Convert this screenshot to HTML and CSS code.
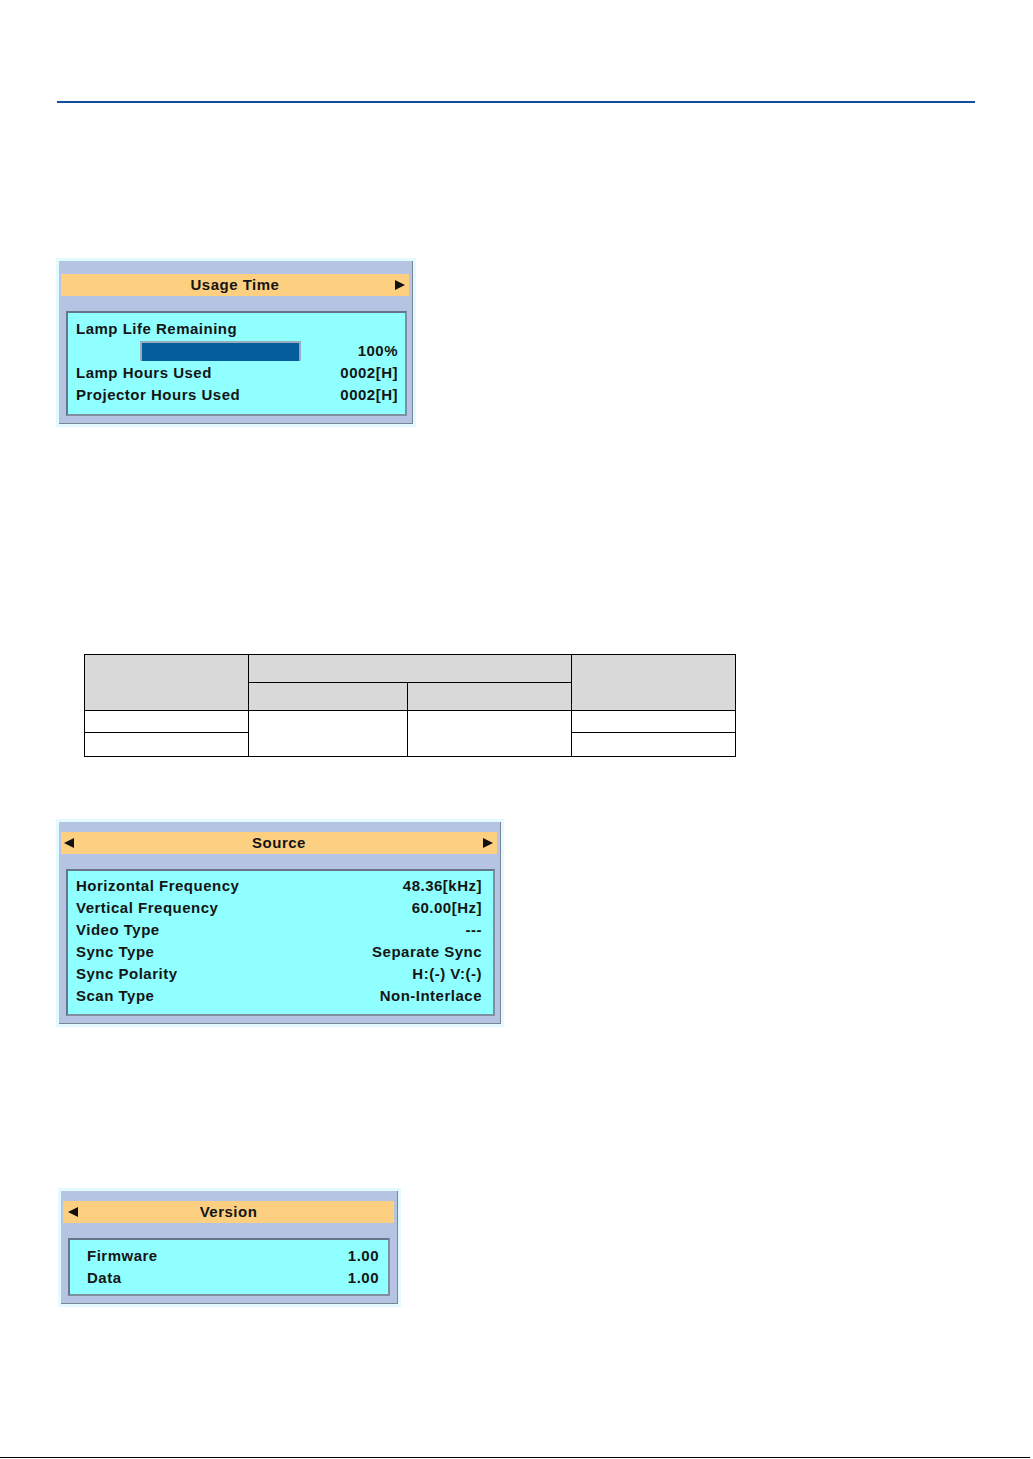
FILE: index.html
```html
<!DOCTYPE html>
<html lang="en">
<head>
    <meta charset="UTF-8">
    <meta name="viewport" content="width=device-width, initial-scale=1.0">
    <title>Information</title>
    <link rel="stylesheet" href="styles.css">
</head>
<body>
    <div class="page">
        <div class="top-rule"></div>

        <!-- Usage Time -->
        <div class="osd osd-usage">
            <div class="osd-frame">
                <div class="osd-head">
                    <span class="arrow-slot"></span>
                    <span class="osd-title">Usage Time</span>
                    <span class="arrow-slot arrow-right">
                        <svg width="10" height="10" viewBox="0 0 10 10"><polygon points="0,0 10,5 0,10" fill="#111"/></svg>
                    </span>
                </div>
                <div class="osd-box">
                    <div class="osd-row"><span>Lamp Life Remaining</span></div>
                    <div class="osd-row">
                        <span class="lamp-bar"><span class="lamp-fill" style="width: 100%;"></span></span>
                        <span>100%</span>
                    </div>
                    <div class="osd-row"><span>Lamp Hours Used</span><span>0002[H]</span></div>
                    <div class="osd-row"><span>Projector Hours Used</span><span>0002[H]</span></div>
                </div>
            </div>
        </div>

        <table class="grid-table">
            <tr class="head">
                <td rowspan="2" class="c1"></td>
                <td colspan="2"></td>
                <td rowspan="2" class="c4"></td>
            </tr>
            <tr class="head">
                <td class="c2"></td>
                <td class="c3"></td>
            </tr>
            <tr class="r1">
                <td></td>
                <td rowspan="2"></td>
                <td rowspan="2"></td>
                <td></td>
            </tr>
            <tr class="r2">
                <td></td>
                <td></td>
            </tr>
        </table>

        <!-- Source -->
        <div class="osd osd-source">
            <div class="osd-frame">
                <div class="osd-head">
                    <span class="arrow-slot arrow-left">
                        <svg width="10" height="10" viewBox="0 0 10 10"><polygon points="10,0 0,5 10,10" fill="#111"/></svg>
                    </span>
                    <span class="osd-title">Source</span>
                    <span class="arrow-slot arrow-right">
                        <svg width="10" height="10" viewBox="0 0 10 10"><polygon points="0,0 10,5 0,10" fill="#111"/></svg>
                    </span>
                </div>
                <div class="osd-box">
                    <div class="osd-row"><span>Horizontal Frequency</span><span>48.36[kHz]</span></div>
                    <div class="osd-row"><span>Vertical Frequency</span><span>60.00[Hz]</span></div>
                    <div class="osd-row"><span>Video Type</span><span>---</span></div>
                    <div class="osd-row"><span>Sync Type</span><span>Separate Sync</span></div>
                    <div class="osd-row"><span>Sync Polarity</span><span>H:(-) V:(-)</span></div>
                    <div class="osd-row"><span>Scan Type</span><span>Non-Interlace</span></div>
                </div>
            </div>
        </div>

        <!-- Version -->
        <div class="osd osd-version">
            <div class="osd-frame">
                <div class="osd-head">
                    <span class="arrow-slot arrow-left">
                        <svg width="10" height="10" viewBox="0 0 10 10"><polygon points="10,0 0,5 10,10" fill="#111"/></svg>
                    </span>
                    <span class="osd-title">Version</span>
                    <span class="arrow-slot"></span>
                </div>
                <div class="osd-box">
                    <div class="osd-row"><span>Firmware</span><span>1.00</span></div>
                    <div class="osd-row"><span>Data</span><span>1.00</span></div>
                </div>
            </div>
        </div>

        <div class="bottom-rule"></div>
    </div>
</body>
</html>
```

FILE: styles.css
```css
body {
    margin: 0;
    background-color: #ffffff;
    font-family: "Liberation Sans", Arial, sans-serif;
}
.page {
    display: flex;
    flex-direction: column;
    align-items: flex-start;
    height: 1459px;
    overflow: hidden;
}
.top-rule {
    margin: 101px 0 0 57px;
    width: 918px;
    height: 2px;
    background-color: #0f4f9c;
}
.bottom-rule {
    margin-top: 150px;
    width: 1030px;
    height: 1px;
    background-color: #000;
}

/* on-screen menu panels */
.osd {
    border: 3px solid #e3fbff;
}
.osd-frame {
    background-color: #b5c4e3;
    border-right: 1px solid #7a8494;
    border-bottom: 1px solid #7a8494;
    padding: 13px 3px 7px 2px;
}
.osd-head {
    display: grid;
    grid-template-columns: 24px 1fr 24px;
    align-items: center;
    height: 22px;
    background-color: #fdd081;
    color: #151515;
    font-size: 15px;
    font-weight: bold;
    letter-spacing: 0.5px;
}
.osd-title {
    text-align: center;
    padding-bottom: 2px;
}
.arrow-slot {
    display: flex;
    align-items: center;
}
.arrow-left {
    padding-left: 3px;
}
.arrow-right {
    justify-content: flex-end;
    padding-right: 4px;
}
.osd-box {
    margin: 15px 2px 0 5px;
    background-color: #90ffff;
    border: 2px solid #7f8ea0;
    border-top-color: #66768a;
    border-left-color: #66768a;
    padding: 4px 9px 7px 8px;
    color: #151515;
    font-size: 15px;
    font-weight: bold;
    letter-spacing: 0.5px;
}
.osd-row {
    display: flex;
    justify-content: space-between;
    align-items: center;
    height: 22px;
}
.osd-row span {
    padding-bottom: 2px;
}
.osd-row .lamp-bar {
    padding-bottom: 0;
}
.lamp-bar {
    display: block;
    margin-left: 64px;
    width: 157px;
    height: 16px;
    border: 2px solid #9aabbd;
    background-color: #0a5f99;
}
.lamp-fill {
    display: block;
    height: 100%;
    background-color: #035e9b;
}

.osd-usage {
    margin: 155px 0 0 56px;
}
.osd-usage .osd-frame {
    width: 348px;
    padding-top: 13px;
}
.osd-usage .osd-box {
    padding: 5px 7px 8px 8px;
}

.osd-source {
    margin: 62px 0 0 56px;
}
.osd-source .osd-frame {
    width: 436px;
    padding-top: 10px;
}
.osd-source .osd-box {
    padding: 4px 11px 7px 8px;
}

.osd-version {
    margin: 161px 0 0 58px;
}
.osd-version .osd-frame {
    width: 331px;
    padding-top: 10px;
}
.osd-version .osd-box {
    margin-right: 4px;
    padding: 5px 9px 5px 17px;
}
.osd-version .arrow-left {
    padding-left: 5px;
}

/* empty grey-header table */
.grid-table {
    margin: 227px 0 0 84px;
    border-collapse: collapse;
}
.grid-table td {
    border: 1px solid #000;
    padding: 0;
}
.grid-table .head td {
    background-color: #d9d9d9;
    height: 27px;
}
.grid-table .c1 { width: 163px; }
.grid-table .c2 { width: 158px; }
.grid-table .c3 { width: 163px; }
.grid-table .c4 { width: 163px; }
.grid-table .r1 td { height: 21px; }
.grid-table .r2 td { height: 23px; }
```
